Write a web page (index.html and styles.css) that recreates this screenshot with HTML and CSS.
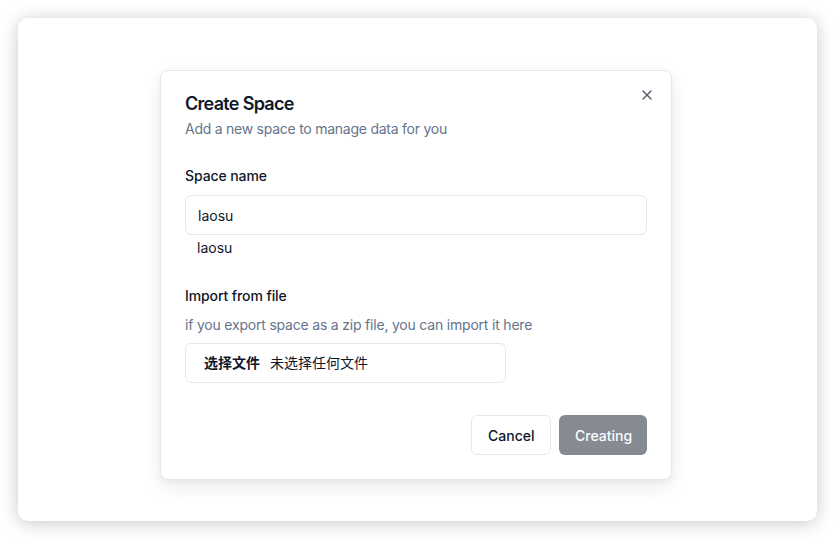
FILE: index.html
```html
<!DOCTYPE html>
<html lang="en">
<head>
    <meta charset="UTF-8">
    <meta name="viewport" content="width=device-width, initial-scale=1.0">
    <title>Create Space</title>
    <link rel="stylesheet" href="styles.css">
</head>
<body>
    <div class="window">
        <div class="dialog">
            <button class="close-button" aria-label="Close">
                <svg width="16" height="16" viewBox="0 0 24 24" fill="none" stroke="currentColor" stroke-width="2" stroke-linecap="round" stroke-linejoin="round">
                    <path d="M18 6 6 18"/>
                    <path d="m6 6 12 12"/>
                </svg>
            </button>

            <div class="dialog-header">
                <h2 class="dialog-title">Create Space</h2>
                <p class="dialog-desc">Add a new space to manage data for you</p>
            </div>

            <div class="field">
                <label class="field-label" for="space-name">Space name</label>
                <input id="space-name" class="text-input" type="text" value="laosu">
                <div class="field-preview">laosu</div>
            </div>

            <div class="field field-import">
                <label class="field-label">Import from file</label>
                <p class="field-hint">if you export space as a zip file, you can import it here</p>
                <div class="file-input">
                    <span class="file-button">选择文件</span>
                    <span class="file-name">未选择任何文件</span>
                </div>
            </div>

            <div class="dialog-footer">
                <button class="btn btn-outline">Cancel</button>
                <button class="btn btn-primary" disabled>Creating</button>
            </div>
        </div>
    </div>
</body>
</html>
```

FILE: styles.css
```css
* {
    box-sizing: border-box;
}

body {
    font-family: Inter, "Noto Sans CJK SC", sans-serif;
    background-color: #ffffff;
    margin: 0;
    padding: 18px;
    height: 539px;
    color: #0f172a;
}

.window {
    height: 503px;
    background: white;
    border-radius: 10px;
    box-shadow: 0 2px 18px rgba(0, 0, 0, 0.22);
    display: flex;
    justify-content: center;
    padding-top: 52px;
    padding-right: 3px;
}

.dialog {
    position: relative;
    width: 512px;
    height: 410px;
    background: white;
    border: 1px solid #e2e8f0;
    border-radius: 8px;
    box-shadow: 0 8px 20px rgba(15, 23, 42, 0.08), 0 2px 6px rgba(15, 23, 42, 0.05);
    padding: 24px;
    display: flex;
    flex-direction: column;
}

.close-button {
    position: absolute;
    top: 16px;
    right: 16px;
    width: 16px;
    height: 16px;
    padding: 0;
    border: none;
    background: none;
    color: #0f172a;
    opacity: 0.7;
    cursor: pointer;
}

.close-button svg {
    display: block;
}

.dialog-header {
    display: flex;
    flex-direction: column;
    gap: 6px;
}

.dialog-title {
    margin: 0;
    font-size: 18px;
    line-height: 18px;
    font-weight: 600;
    letter-spacing: -0.7px;
}

.dialog-desc {
    margin: 0;
    font-size: 14px;
    line-height: 20px;
    color: #64748b;
    letter-spacing: -0.25px;
}

.field {
    display: flex;
    flex-direction: column;
    margin-top: 30px;
}

.field-label {
    font-size: 14px;
    line-height: 14px;
    font-weight: 500;
    letter-spacing: -0.1px;
}

.text-input {
    margin-top: 12px;
    height: 40px;
    padding: 0 12px;
    border: 1px solid #e2e8f0;
    border-radius: 6px;
    font-family: inherit;
    font-size: 14px;
    color: #0f172a;
    outline: none;
}

.field-preview {
    margin-top: 3px;
    padding-left: 12px;
    font-size: 14px;
    line-height: 20px;
}

.field-import {
    margin-top: 31px;
}

.field-hint {
    margin: 12px 0 0;
    font-size: 14px;
    line-height: 20px;
    color: #64748b;
    letter-spacing: -0.2px;
}

.file-input {
    margin-top: 8px;
    width: 321px;
    height: 40px;
    border: 1px solid #e2e8f0;
    border-radius: 6px;
    display: flex;
    align-items: center;
    padding-left: 18px;
    padding-bottom: 2px;
    font-size: 14px;
}

.file-button {
    font-weight: 600;
    margin-right: 10px;
}

.dialog-footer {
    margin-top: auto;
    display: flex;
    justify-content: flex-end;
    gap: 8px;
}

.btn {
    height: 40px;
    padding: 0 16px;
    border-radius: 6px;
    font-family: inherit;
    font-size: 14px;
    font-weight: 500;
    cursor: pointer;
}

.btn-outline {
    width: 80px;
    background: white;
    border: 1px solid #e2e8f0;
    color: #0f172a;
}

.btn-primary {
    width: 88px;
    background: #0f172a;
    border: none;
    color: #f8fafc;
}

.btn-primary:disabled {
    opacity: 0.5;
    cursor: default;
}
```
